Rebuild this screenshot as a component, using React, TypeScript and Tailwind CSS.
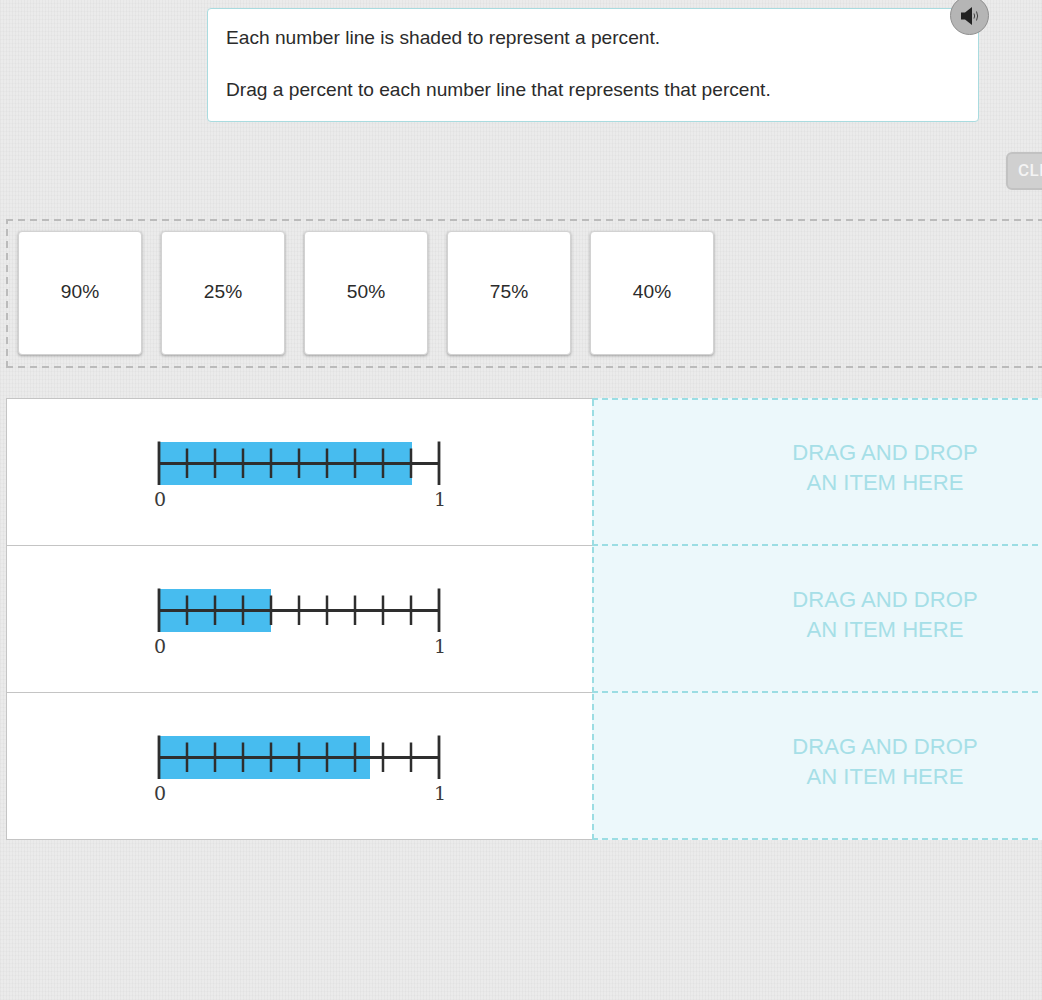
import React from "react";

const percents = ["90%", "25%", "50%", "75%", "40%"];
const lines = [253, 112, 211];

function NumberLine({ fill }: { fill: number }) {
  const ticks = [1, 2, 3, 4, 5, 6, 7, 8, 9];
  return (
    <svg width="300" height="72" viewBox="0 0 300 72" className="block">
      <rect x="10" y="2" width={fill} height="43" fill="#47bcef" />
      <line x1="10" y1="23.500" x2="290" y2="23.500" stroke="#2e2e2e" strokeWidth="3" />
      <line x1="10" y1="1.500" x2="10" y2="45" stroke="#2e2e2e" strokeWidth="2.800" />
      <line x1="290" y1="1.500" x2="290" y2="45" stroke="#2e2e2e" strokeWidth="2.800" />
      {ticks.map((t) => (
        <line key={t} x1={10 + t * 28} y1="8.500" x2={10 + t * 28} y2="38" stroke="#2e2e2e" strokeWidth="2.500" />
      ))}
      <text x="11" y="66" textAnchor="middle" fontSize="19" fill="#3a3a3a" fontFamily="'DejaVu Serif', serif">0</text>
      <text x="291" y="66" textAnchor="middle" fontSize="19" fill="#3a3a3a" fontFamily="'DejaVu Serif', serif">1</text>
    </svg>
  );
}

export default function App() {
  return (
    <div className="relative h-[1000px] w-[1042px] overflow-hidden bg-[#e9e9e9] bg-[repeating-linear-gradient(90deg,rgba(0,0,0,0.018)_0,rgba(0,0,0,0.018)_1px,rgba(255,255,255,0.05)_1px,rgba(255,255,255,0.05)_3px),repeating-linear-gradient(0deg,rgba(0,0,0,0.012)_0,rgba(0,0,0,0.012)_1px,rgba(255,255,255,0.04)_1px,rgba(255,255,255,0.04)_4px)] pt-2 font-['Liberation_Sans',Arial,sans-serif] text-[#2b2b2b]">
      <div className="relative ml-[207px] h-[114px] w-[772px] rounded border border-[#a9dbdf] bg-white px-[18px] pt-[16px] text-[19.150px] leading-[26px]">
        <p>Each number line is shaded to represent a percent.</p>
        <p className="mt-[26px]">Drag a percent to each number line that represents that percent.</p>
        <button className="absolute top-[-13px] right-[-11px] flex h-[39px] w-[39px] items-center justify-center rounded-full border border-[#8f8f8f] bg-[#b5b5b5]">
          <svg width="18" height="18" viewBox="0 0 18 18">
            <path d="M0 5.500h4L11 0v18L4 12.500H0z" fill="#222" />
            <path d="M13 6.500q1.300 2.500 0 5M15.500 4.500q2.300 4.500 0 9" fill="none" stroke="#444" strokeWidth="1" />
          </svg>
        </button>
      </div>

      <div className="mt-[30px] ml-[1006px] flex h-[38px] w-[80px] items-center rounded-md border-2 border-[#c2c2c2] bg-[#d0d0d0] pl-[10px] font-['Roboto',sans-serif] text-[17px] font-medium tracking-wide text-[#f4f4f4]">
        CLEAR
      </div>

      <div className="mt-[29px] ml-[6px] flex h-[149px] w-[1100px] gap-[19px] bg-[repeating-linear-gradient(90deg,#bbbbbb_0,#bbbbbb_7px,transparent_7px,transparent_12px),repeating-linear-gradient(90deg,#bbbbbb_0,#bbbbbb_7px,transparent_7px,transparent_12px),repeating-linear-gradient(0deg,#bbbbbb_0,#bbbbbb_7px,transparent_7px,transparent_12px)] bg-[length:100%_2px,100%_2px,2px_100%] bg-[position:0_0,0_100%,0_0] bg-no-repeat p-[12px]">
        {percents.map((p) => (
          <div
            key={p}
            className="flex h-[124px] w-[124px] items-center justify-center rounded border border-[#d2d2d2] bg-white pb-[2px] text-[19.150px] shadow-[0_1px_3px_rgba(0,0,0,0.3)]"
          >
            {p}
          </div>
        ))}
      </div>

      <div className="mt-[30px] ml-[6px] w-[1180px]">
        {lines.map((fill, i) => (
          <div key={i} className={`flex ${i === 0 ? "h-[148px]" : "h-[147px]"}`}>
            <div
              className={`flex w-[586px] justify-start border-b border-l border-[#c4c4c4] bg-white pt-[41px] pl-[142px] ${
                i === 0 ? "border-t" : ""
              }`}
            >
              <NumberLine fill={fill} />
            </div>
            <div
              className={`flex w-[586px] flex-col items-center justify-center bg-[#ecf8fb] bg-[repeating-linear-gradient(90deg,#9bdde3_0,#9bdde3_6px,transparent_6px,transparent_10px),repeating-linear-gradient(0deg,#9bdde3_0,#9bdde3_6px,transparent_6px,transparent_10px),repeating-linear-gradient(90deg,#9bdde3_0,#9bdde3_6px,transparent_6px,transparent_10px)] bg-no-repeat text-[22.100px] leading-[30px] text-[#a6dfe7] ${
                i === 0
                  ? "bg-[length:100%_2px,2px_100%,100%_2px] bg-[position:0_100%,0_0,0_0] pb-[8px]"
                  : "bg-[length:100%_2px,2px_100%,0_0] bg-[position:0_100%,0_0,0_0] pb-[9px]"
              }`}
            >
              <span>DRAG AND DROP</span>
              <span>AN ITEM HERE</span>
            </div>
          </div>
        ))}
      </div>
    </div>
  );
}
